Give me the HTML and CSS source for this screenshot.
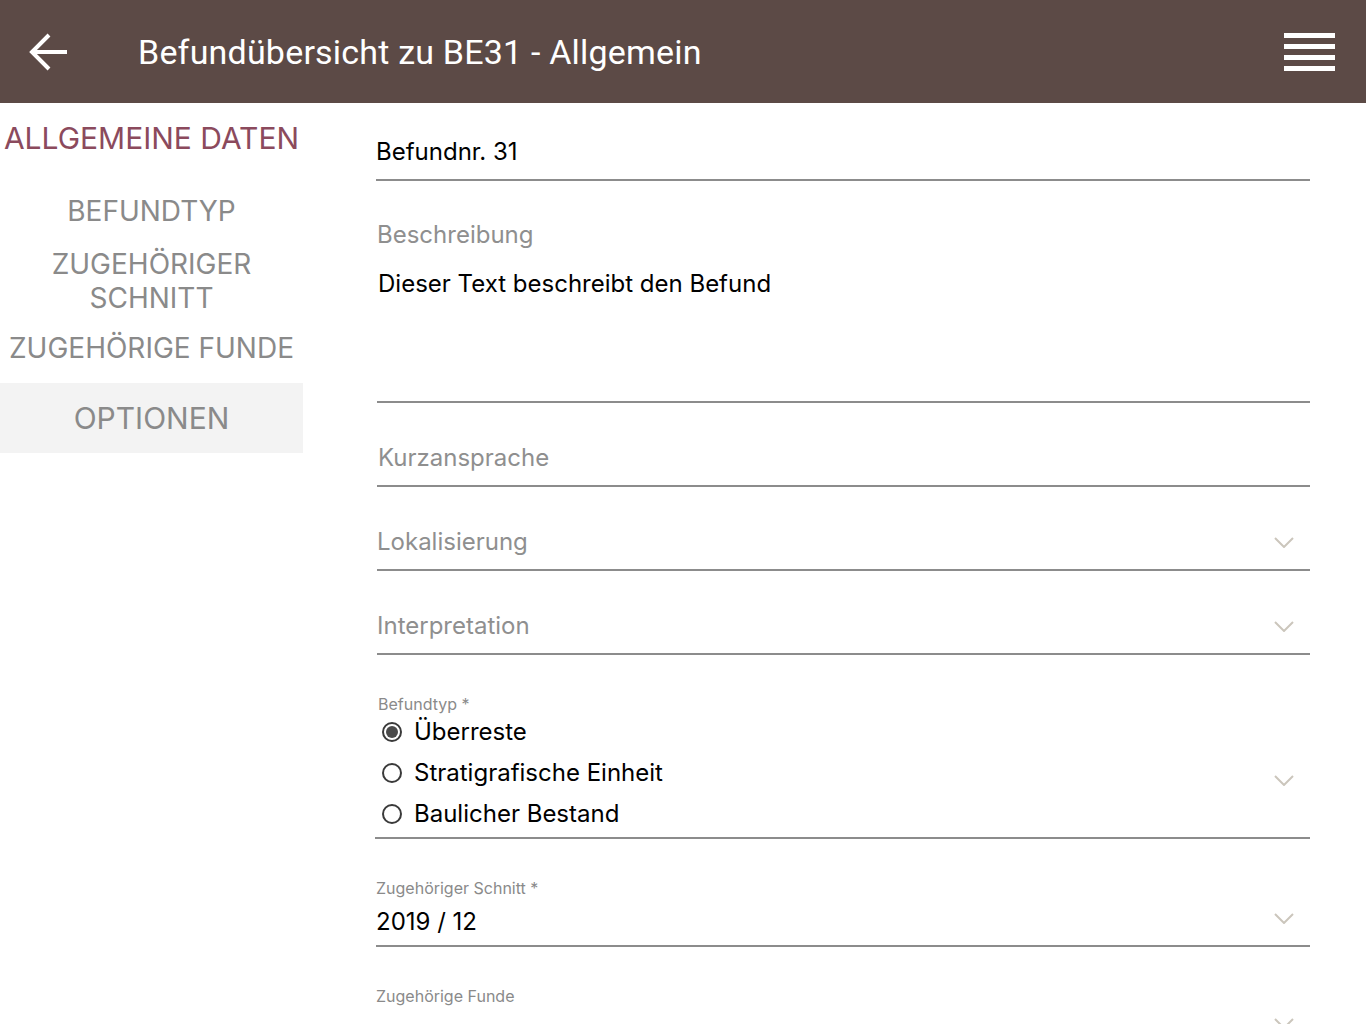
FILE: index.html
```html
<!DOCTYPE html>
<html lang="de">
<head>
<meta charset="utf-8">
<title>Befundübersicht zu BE31 - Allgemein</title>
<link rel="stylesheet" href="styles.css">
</head>
<body>
<header class="topbar">
  <button class="back" aria-label="Zurück">
    <svg width="40" height="40" viewBox="0 0 40 40"><path d="M38 20H4M20 3L3 20l17 17" fill="none" stroke="#fff" stroke-width="4"/></svg>
  </button>
  <h1 class="title">Befundübersicht zu BE31 - Allgemein</h1>
  <button class="menu" aria-label="Menü">
    <span></span><span></span><span></span><span></span>
  </button>
</header>
<div class="layout">
  <nav class="sidebar">
    <a class="nav-item active n1">ALLGEMEINE DATEN</a>
    <a class="nav-item n2">BEFUNDTYP</a>
    <a class="nav-item n3">ZUGEHÖRIGER SCHNITT</a>
    <a class="nav-item n4">ZUGEHÖRIGE FUNDE</a>
    <a class="nav-item options">OPTIONEN</a>
  </nav>
  <main class="form">
    <div class="field f-nr">
      <div class="value">Befundnr. 31</div>
    </div>
    <div class="field f-desc">
      <div class="placeholder">Beschreibung</div>
      <div class="value textarea">Dieser Text beschreibt den Befund</div>
    </div>
    <div class="field f-short">
      <div class="placeholder">Kurzansprache</div>
    </div>
    <div class="field f-sel">
      <div class="placeholder">Lokalisierung</div>
      <svg class="chev c-mid" width="20" height="11" viewBox="0 0 20 11"><path d="M1 1l9 9 9-9" fill="none" stroke="#cbc6bc" stroke-width="2"/></svg>
    </div>
    <div class="field f-sel">
      <div class="placeholder">Interpretation</div>
      <svg class="chev c-mid" width="20" height="11" viewBox="0 0 20 11"><path d="M1 1l9 9 9-9" fill="none" stroke="#cbc6bc" stroke-width="2"/></svg>
    </div>
    <div class="field f-radio">
      <div class="small-label">Befundtyp *</div>
      <label class="radio"><span class="dot checked"></span>Überreste</label>
      <label class="radio"><span class="dot"></span>Stratigrafische Einheit</label>
      <label class="radio"><span class="dot"></span>Baulicher Bestand</label>
      <svg class="chev c-radio" width="20" height="11" viewBox="0 0 20 11"><path d="M1 1l9 9 9-9" fill="none" stroke="#cbc6bc" stroke-width="2"/></svg>
    </div>
    <div class="field f-schnitt">
      <div class="small-label">Zugehöriger Schnitt *</div>
      <div class="value">2019 / 12</div>
      <svg class="chev c-schnitt" width="20" height="11" viewBox="0 0 20 11"><path d="M1 1l9 9 9-9" fill="none" stroke="#cbc6bc" stroke-width="2"/></svg>
    </div>
    <div class="field f-funde">
      <div class="small-label">Zugehörige Funde</div>
      <svg class="chev c-funde" width="20" height="11" viewBox="0 0 20 11"><path d="M1 1l9 9 9-9" fill="none" stroke="#cbc6bc" stroke-width="2"/></svg>
    </div>
  </main>
</div>
</body>
</html>
```

FILE: styles.css
```css
* { box-sizing: border-box; }
html, body { margin: 0; padding: 0; }
body {
  width: 1366px;
  height: 1024px;
  overflow: hidden;
  background: #fff;
  font-family: Inter, "Noto Sans", sans-serif;
}
.topbar {
  height: 103px;
  background: #5c4a46;
  display: flex;
  align-items: center;
}
.back {
  background: none;
  border: 0;
  padding: 0;
  margin-left: 29px;
  width: 40px;
  height: 40px;
  display: flex;
}
.title {
  margin: 0 0 0 69px;
  font-family: Roboto, "Liberation Sans", sans-serif;
  font-weight: 400;
  font-size: 34px;
  color: #fff;
  flex: 1;
  letter-spacing: 0.2px;
}
.menu {
  background: none;
  border: 0;
  padding: 0;
  margin-right: 31px;
  width: 51px;
  display: flex;
  flex-direction: column;
  gap: 6px;
  margin-top: 0;
}
.menu span {
  display: block;
  height: 5px;
  background: #fff;
}
.layout {
  display: flex;
}
.sidebar {
  width: 303px;
  display: flex;
  flex-direction: column;
  font-size: 28px;
  line-height: 34px;
  color: #8a8a8a;
  text-align: center;
}
.nav-item { display: block; padding: 0 2px; }
.nav-item.active { color: #8b4a5d; font-size: 30px; }
.n1 { margin-top: 18px; }
.n2 { margin-top: 39px; }
.n3 { margin-top: 19px; padding: 0 40px; }
.n4 { margin-top: 16px; }
.options {
  margin-top: 18px;
  height: 70px;
  line-height: 70px;
  font-size: 30px;
  background: #f3f3f3;
}
.form {
  margin-left: 73px;
  width: 934px;
}
.field {
  position: relative;
  border-bottom: 2px solid #8c8c8c;
}
.value {
  font-size: 24px;
  line-height: 28px;
  color: #000;
}
.placeholder {
  font-size: 24px;
  line-height: 28px;
  color: #8f8f8f;
}
.small-label {
  font-size: 16px;
  line-height: 18px;
  color: #8a8a8a;
}
.f-nr { margin-top: 35px; padding-bottom: 13px; }
.f-desc { margin-top: 40px; padding-bottom: 103px; margin-left: 1px; }
.f-desc .textarea { margin-top: 21px; margin-left: 1px; }
.f-short { margin-top: 41px; padding-bottom: 13px; margin-left: 1px; padding-left: 1px; }
.f-sel { margin-top: 41px; padding-bottom: 13px; margin-left: 1px; }
.f-radio { margin-top: 40px; margin-left: -1px; padding-left: 3px; padding-bottom: 3px; }
.f-radio .small-label { margin-bottom: -2px; }
.radio {
  display: flex;
  align-items: center;
  height: 41px;
  font-size: 24px;
  color: #000;
}
.dot {
  width: 20px;
  height: 20px;
  border: 2px solid #3a3a3a;
  border-radius: 50%;
  margin: 0 12px 0 4px;
  display: flex;
  align-items: center;
  justify-content: center;
}
.dot.checked::after {
  content: "";
  width: 12px;
  height: 12px;
  border-radius: 50%;
  background: #4a4a4a;
}
.f-schnitt { margin-top: 40px; padding-bottom: 9px; }
.f-schnitt .value { margin-top: 11px; }
.f-funde { margin-top: 40px; border-bottom: 0; height: 60px; }
.chev { position: absolute; right: 16px; }
.c-mid { top: 9px; }
.c-radio { top: 80px; }
.c-schnitt { top: 34px; }
.c-funde { top: 31px; }
```
